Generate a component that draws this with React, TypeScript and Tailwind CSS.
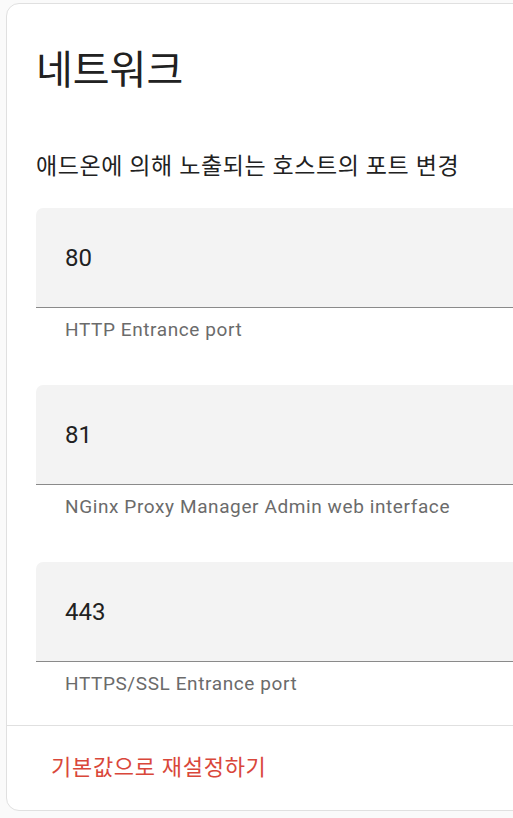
import React from "react"

const fields = [
  { value: "80", helper: "HTTP Entrance port" },
  { value: "81", helper: "NGinx Proxy Manager Admin web interface" },
  { value: "443", helper: "HTTPS/SSL Entrance port" },
]

function PortField({ value, helper }: { value: string; helper: string }) {
  return (
    <div className="flex flex-col">
      {/* 입력 칸 */}
      <div className="h-[100px] bg-[#f3f3f3] rounded-t-[7px] border-b border-[#8a8a8a] flex items-center pl-[29px]">
        <span className="text-[24px] text-[#212121] leading-none">{value}</span>
      </div>
      {/* 도움말 */}
      <div className="h-[77px] pl-[29px] pt-[11px] text-[19px] text-[#6b6b6b] leading-[22px] tracking-[0.6px]">
        {helper}
      </div>
    </div>
  )
}

export default function App() {
  return (
    <div
      className="w-[513px] h-[818px] overflow-hidden bg-[#fafafa] pt-[3px] pl-[6px]"
      style={{ fontFamily: "Roboto, 'Noto Sans CJK KR', sans-serif" }}
    >
      <div className="w-[600px] h-[808px] bg-white border border-[#e0e0e0] rounded-[13px] flex flex-col">
        {/* 헤더 */}
        <div className="pl-[29px] pt-[43px] h-[103px]">
          <h1 className="text-[40px] leading-[48px] text-[#212121] font-normal">네트워크</h1>
        </div>

        <div className="pl-[29px] pr-[30px]">
          <p className="text-[23px] leading-[30px] text-[#212121] tracking-[0.6px] mt-[45px] mb-[26px]">
            애드온에 의해 노출되는 호스트의 포트 변경
          </p>
          {fields.map((f) => (
            <PortField key={f.value} value={f.value} helper={f.helper} />
          ))}
        </div>

        {/* 하단 버튼 영역 */}
        <div className="mt-[-14px] border-t border-[#e0e0e0] flex-1 flex items-start pl-[44px] pt-[27px]">
          <button className="text-[22px] leading-[30px] text-[#d9473a] tracking-[0.7px]">
            기본값으로 재설정하기
          </button>
        </div>
      </div>
    </div>
  )
}
